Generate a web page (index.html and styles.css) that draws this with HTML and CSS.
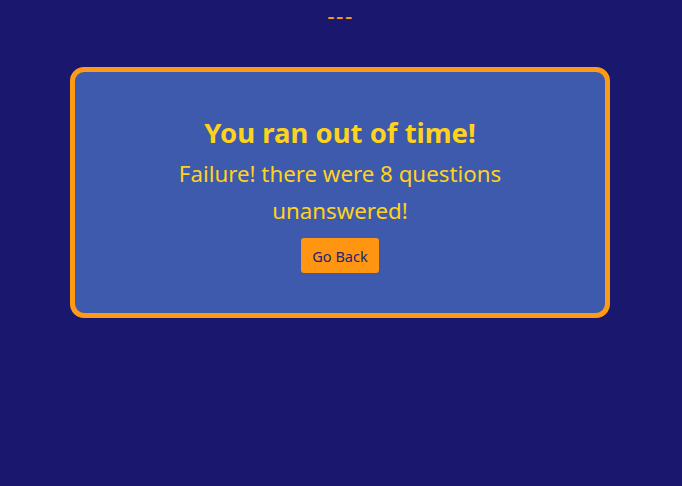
FILE: index.html
```html
<!DOCTYPE html>
<html>
<head>
<meta charset="utf-8">
<link rel="stylesheet" href="styles.css">
</head>
<body>
<div class="page">
  <div class="timer">---</div>
  <div class="card">
    <h1 class="title">You ran out of time!</h1>
    <p class="message">Failure! there were 8 questions unanswered!</p>
    <button class="back">Go Back</button>
  </div>
</div>
</body>
</html>
```
FILE: styles.css
```css
html, body {
  margin: 0;
  padding: 0;
  background: #1a186e;
  height: 100%;
}
.page {
  font-family: "Noto Sans", "Open Sans", sans-serif;
  display: flex;
  flex-direction: column;
  align-items: center;
}
.timer {
  color: #ff9a17;
  font-size: 23px;
  line-height: 31px;
  letter-spacing: 1.5px;
  margin-left: -1px;
}
.card {
  margin-top: 36px;
  margin-right: 2px;
  width: 530px;
  height: 241px;
  box-sizing: content-box;
  border: 5px solid #ff9a17;
  border-radius: 14px;
  background: #3d5aac;
  display: flex;
  flex-direction: column;
  align-items: center;
}
.title {
  margin: 43px 0 0;
  color: #ffd21f;
  font-size: 27.5px;
  font-weight: 700;
  line-height: 36px;
}
.message {
  margin: 4px 0 0;
  width: 380px;
  text-align: center;
  color: #ffd21f;
  font-size: 22.3px;
  line-height: 37px;
}
.back {
  margin-top: 9px;
  width: 78px;
  height: 35px;
  border: none;
  border-radius: 3px;
  background: #ff9510;
  color: #23237a;
  font-family: inherit;
  font-size: 14.5px;
  padding: 0;
}
```
